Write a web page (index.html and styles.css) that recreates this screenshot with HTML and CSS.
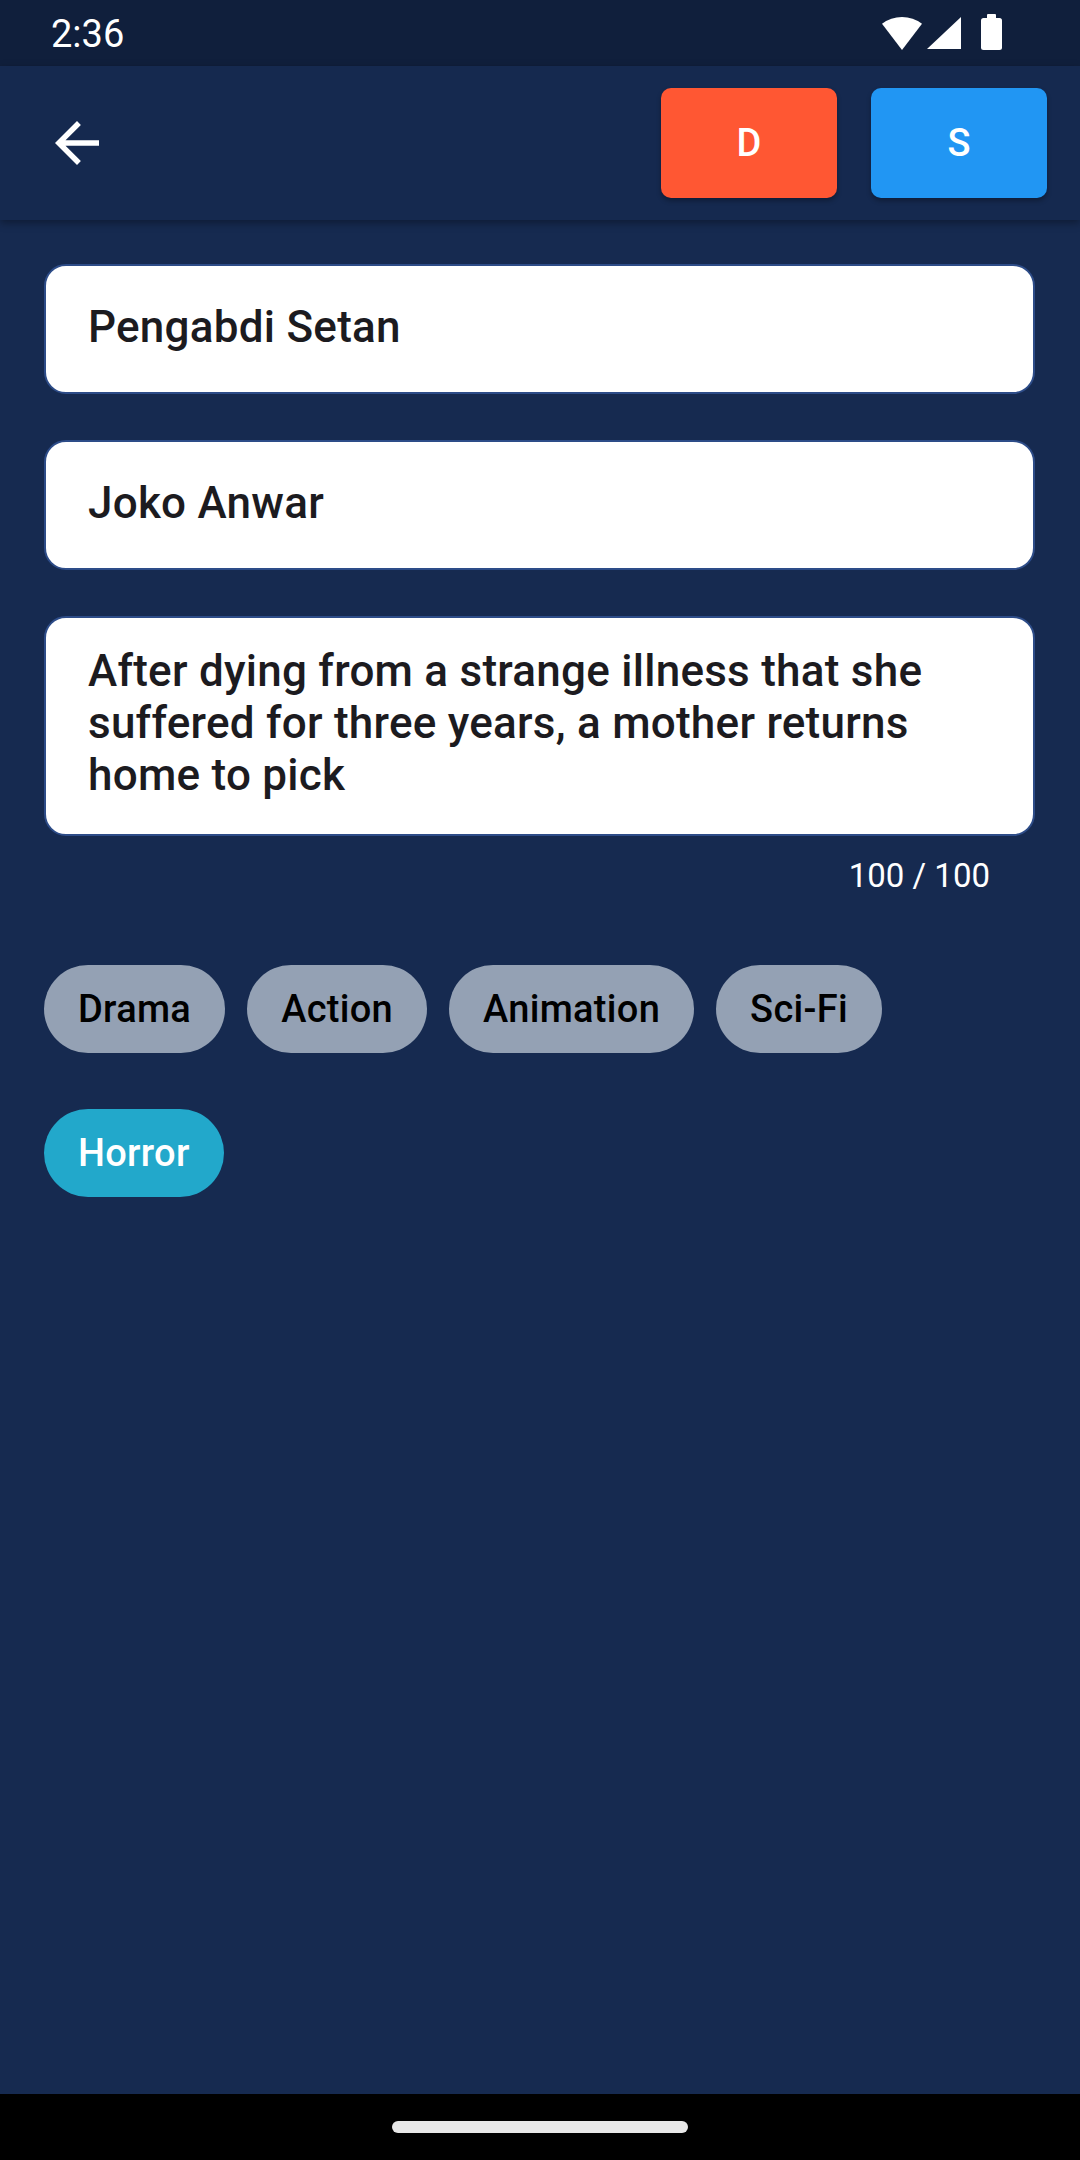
FILE: index.html
```html
<!DOCTYPE html>
<html lang="en">
<head>
<meta charset="utf-8">
<title>Edit Movie</title>
<link rel="stylesheet" href="styles.css">
</head>
<body>
<div class="screen">
  <div class="status-bar">
    <span class="time">2:36</span>
    <div class="status-icons">
      <svg class="wifi" width="40" height="34" viewBox="0 0 40 34"><path d="M20 33 L0 6.8 A33 33 0 0 1 40 6.8 Z" fill="#fff"/></svg>
      <svg class="signal" width="34" height="33" viewBox="0 0 34 33"><path d="M34 0 L34 32 L0 32 Z" fill="#fff"/></svg>
      <svg class="battery" width="22" height="37" viewBox="0 0 22 37"><rect x="6" y="0" width="9" height="6" rx="1" fill="#fff"/><rect x="0" y="4" width="21" height="32" rx="2.5" fill="#fff"/></svg>
    </div>
  </div>
  <header class="app-bar">
    <button class="back" aria-label="Back">
      <svg width="66" height="66" viewBox="0 0 24 24"><path d="M20 11H7.83l5.59-5.59L12 4l-8 8 8 8 1.41-1.41L7.83 13H20v-2z" fill="#fff"/></svg>
    </button>
    <div class="actions">
      <button class="btn btn-delete">D</button>
      <button class="btn btn-save">S</button>
    </div>
  </header>
  <main class="content">
    <div class="field single">Pengabdi Setan</div>
    <div class="field single">Joko Anwar</div>
    <div class="field multi">After dying from a strange illness that she suffered for three years, a mother returns home to pick</div>
    <div class="counter">100 / 100</div>
    <div class="chips">
      <span class="chip">Drama</span>
      <span class="chip">Action</span>
      <span class="chip">Animation</span>
      <span class="chip">Sci-Fi</span>
      <span class="chip selected">Horror</span>
    </div>
  </main>
  <div class="nav-bar"><div class="pill"></div></div>
</div>
</body>
</html>
```
FILE: styles.css
```css
* { box-sizing: border-box; }
html, body { margin: 0; padding: 0; }
body {
  width: 1080px;
  height: 2160px;
  font-family: Roboto, "Noto Sans", sans-serif;
  background: #162a50;
  overflow: hidden;
}
.screen {
  display: flex;
  flex-direction: column;
  height: 2160px;
}
.status-bar {
  height: 66px;
  flex: none;
  background: #101f3c;
  display: flex;
  align-items: center;
  justify-content: space-between;
  padding: 0 77px 0 51px;
}
.time {
  color: #fff;
  font-size: 38px;
  line-height: 66px;
  padding-top: 2px;
}
.status-icons {
  display: flex;
  align-items: flex-end;
  height: 66px;
  padding-bottom: 15px;
}
.wifi { margin-right: 5px; }
.signal { margin-right: 20px; margin-bottom: 1px; }
.app-bar {
  height: 154px;
  flex: none;
  background: #15294f;
  display: flex;
  align-items: center;
  justify-content: space-between;
  padding: 0 33px 0 44px;
  position: relative;
  z-index: 2;
  box-shadow: 0 3px 8px rgba(0, 0, 0, 0.35);
}
.back {
  width: 66px;
  height: 66px;
  padding: 0;
  border: 0;
  background: transparent;
  display: flex;
}
.actions {
  display: flex;
  gap: 34px;
}
.btn {
  width: 176px;
  height: 110px;
  border: 0;
  border-radius: 10px;
  color: #fff;
  font-family: Roboto, sans-serif;
  font-size: 38px;
  font-weight: 500;
  box-shadow: 0 3px 5px rgba(0, 0, 0, 0.3);
}
.btn-delete { background: #ff5733; }
.btn-save { background: #2196f3; }
.content {
  flex: 1;
  padding: 44px 45px 0 44px;
  display: flex;
  flex-direction: column;
}
.field {
  background: #fff;
  border: 2px solid #2d4c88;
  border-radius: 22px;
  color: #1c1b1f;
  font-size: 44px;
  font-weight: 500;
  letter-spacing: 0.25px;
  line-height: 52px;
  padding: 0 42px;
}
.field.single {
  height: 130px;
  padding-top: 35px;
  margin-bottom: 46px;
}
.field.multi {
  height: 220px;
  padding-top: 27px;
}
.counter {
  align-self: flex-end;
  color: #fff;
  font-size: 33px;
  line-height: 44px;
  margin-top: 18px;
  margin-right: 45px;
}
.chips {
  display: flex;
  flex-wrap: wrap;
  column-gap: 22px;
  row-gap: 56px;
  margin-top: 67px;
}
.chip {
  height: 88px;
  padding: 0 34px;
  border-radius: 44px;
  background: #94a1b4;
  color: #000;
  font-size: 38px;
  font-weight: 500;
  letter-spacing: 0.3px;
  display: inline-flex;
  align-items: center;
}
.chip.selected {
  background: #22a8cb;
  color: #fff;
}
.nav-bar {
  height: 66px;
  flex: none;
  background: #000;
  display: flex;
  justify-content: center;
  padding-top: 27px;
}
.pill {
  width: 296px;
  height: 12px;
  border-radius: 6px;
  background: #e8e8e8;
}
```
